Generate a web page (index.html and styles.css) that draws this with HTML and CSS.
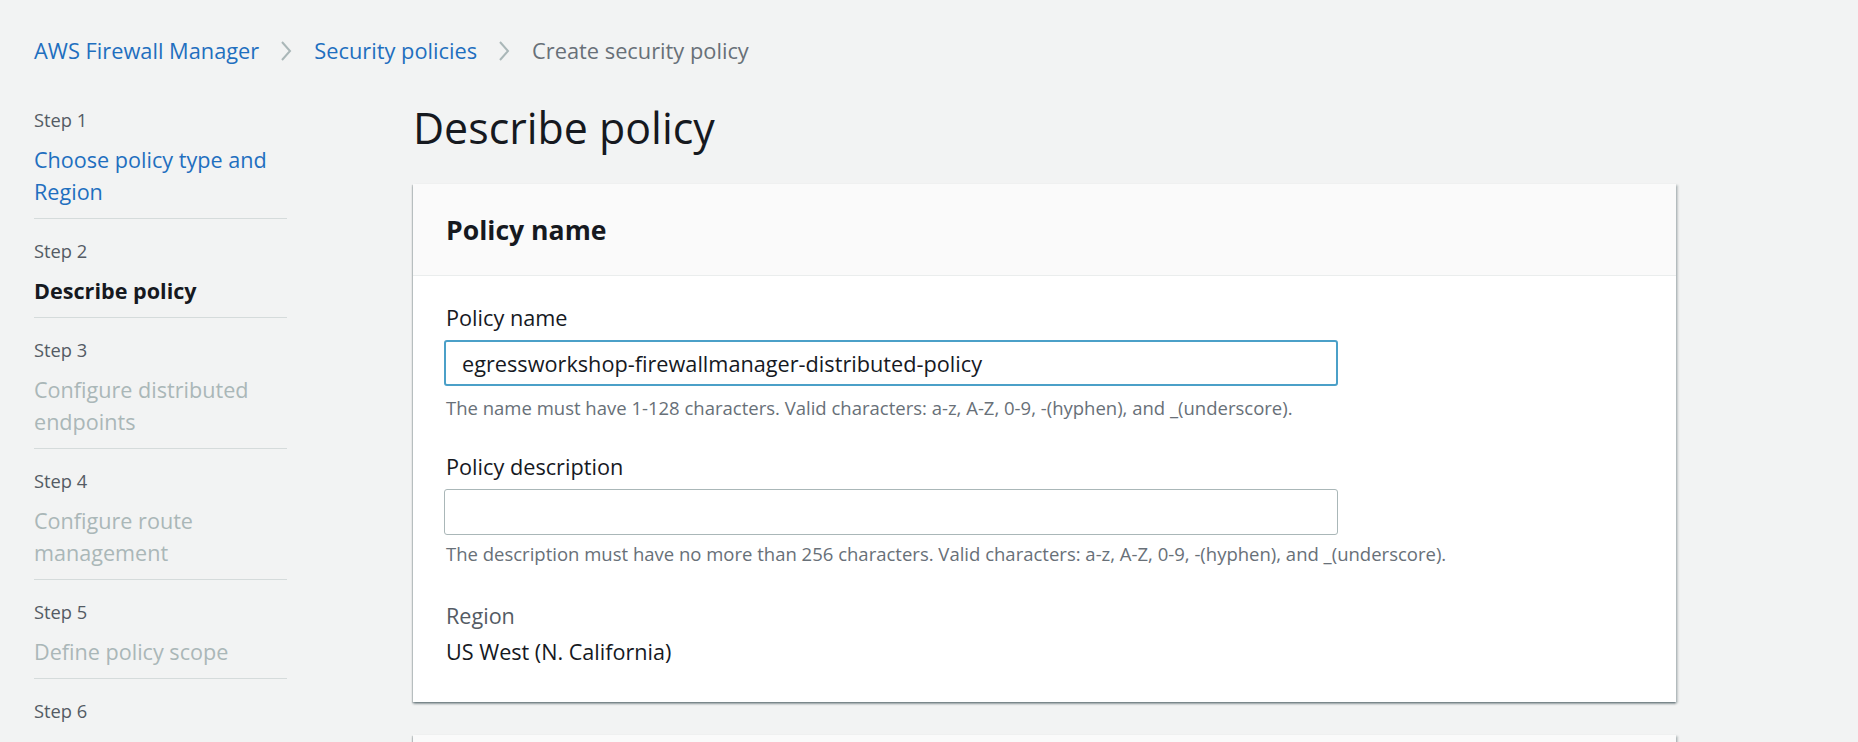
FILE: index.html
```html
<!DOCTYPE html>
<html lang="en">
<head>
<meta charset="utf-8">
<title>Create security policy</title>
<link rel="stylesheet" href="styles.css">
</head>
<body>
<div class="page">
  <nav class="breadcrumbs">
    <a class="crumb link" href="#">AWS Firewall Manager</a>
    <svg class="chev" viewBox="0 0 12 22" width="12" height="22"><polyline points="2,2 10,11 2,20" fill="none" stroke="#aab7b8" stroke-width="2"/></svg>
    <a class="crumb link" href="#">Security policies</a>
    <svg class="chev" viewBox="0 0 12 22" width="12" height="22"><polyline points="2,2 10,11 2,20" fill="none" stroke="#aab7b8" stroke-width="2"/></svg>
    <span class="crumb current">Create security policy</span>
  </nav>
  <div class="layout">
    <ul class="steps">
      <li class="step">
        <div class="step-num">Step 1</div>
        <a class="step-title link" href="#">Choose policy type and Region</a>
      </li>
      <li class="step">
        <div class="step-num">Step 2</div>
        <div class="step-title active">Describe policy</div>
      </li>
      <li class="step">
        <div class="step-num">Step 3</div>
        <div class="step-title disabled">Configure distributed endpoints</div>
      </li>
      <li class="step">
        <div class="step-num">Step 4</div>
        <div class="step-title disabled">Configure route management</div>
      </li>
      <li class="step">
        <div class="step-num">Step 5</div>
        <div class="step-title disabled">Define policy scope</div>
      </li>
      <li class="step">
        <div class="step-num">Step 6</div>
        <div class="step-title disabled">Configure policy tags</div>
      </li>
    </ul>
    <main class="main">
      <h1 class="page-title">Describe policy</h1>
      <section class="card">
        <header class="card-header"><h2>Policy name</h2></header>
        <div class="card-body">
          <label class="field-label" for="pname">Policy name</label>
          <input id="pname" class="input focused" type="text" value="egressworkshop-firewallmanager-distributed-policy">
          <div class="hint hint-1">The name must have 1-128 characters. Valid characters: a-z, A-Z, 0-9, -(hyphen), and _(underscore).</div>
          <label class="field-label label-2" for="pdesc">Policy description</label>
          <input id="pdesc" class="input" type="text" value="">
          <div class="hint hint-2">The description must have no more than 256 characters. Valid characters: a-z, A-Z, 0-9, -(hyphen), and _(underscore).</div>
          <div class="kv-label">Region</div>
          <div class="kv-value">US West (N. California)</div>
        </div>
      </section>
      <section class="card card-next">
        <header class="card-header card-header-empty"></header>
      </section>
    </main>
  </div>
</div>
</body>
</html>
```
FILE: styles.css
```css
* { box-sizing: border-box; }
html, body { margin: 0; padding: 0; }
body {
  background: #f2f3f3;
  font-family: "Open Sans", Roboto, "Liberation Sans", sans-serif;
  color: #16191f;
  width: 1858px;
  height: 742px;
  overflow: hidden;
}
.page { padding: 37px 0 0 34px; }
.link { color: #1f6fbf; text-decoration: none; }

.breadcrumbs {
  display: flex;
  align-items: center;
  height: 28px;
  font-size: 21.8px;
  line-height: 28px;
}
.chev { margin: 0 22px 0 21px; }
.crumb.current { color: #687078; }

.layout {
  display: flex;
  margin-top: 39px;
  gap: 126px;
}
.steps {
  list-style: none;
  margin: 0;
  padding: 4px 0 0 0;
  width: 253px;
  flex: none;
}
.step {
  padding: 20px 0 10px;
  border-bottom: 1px solid #d5dbdb;
}
.step:first-child { padding-top: 0; }
.step-num {
  font-size: 18.3px;
  line-height: 24px;
  color: #545b64;
}
.step-title {
  display: block;
  margin-top: 12px;
  font-size: 21.6px;
  line-height: 32px;
}
.step-title.active { font-weight: 700; color: #16191f; }
.step-title.disabled { color: #aab7b8; }

.main { width: 1263px; flex: none; }
.page-title {
  margin: 0 0 32px;
  font-size: 42.9px;
  line-height: 48px;
  font-weight: 400;
  color: #16191f;
}
.card {
  background: #fff;
  box-shadow: 0 2px 2px 0 rgba(0, 28, 36, 0.35), 2px 1px 2px 0 rgba(0, 28, 36, 0.18), -1px 1px 1px 0 rgba(0, 28, 36, 0.15);
}
.card-header {
  background: #fafafa;
  border-bottom: 1px solid #eaeded;
  padding: 31px 33px 30px;
}
.card-header h2 {
  margin: 0;
  font-size: 26.6px;
  line-height: 30px;
  font-weight: 700;
}
.card-header-empty { height: 92px; }
.card-body {
  padding: 28px 31px 36px;
}
.field-label {
  display: block;
  font-size: 21.7px;
  line-height: 28px;
  margin-bottom: 8px;
  padding-left: 2px;
}
.label-2 { margin-top: 34px; }
.input {
  display: block;
  width: 894px;
  height: 46px;
  border: 1px solid #aab7b8;
  border-radius: 3px;
  background: #fff;
  padding: 0 16px;
  font-family: inherit;
  font-size: 21.7px;
  color: #16191f;
  outline: none;
}
.input.focused {
  border: 2px solid #4ba0c8;
}
.hint {
  font-size: 18.5px;
  line-height: 22px;
  color: #687078;
  padding-left: 2px;
}
.hint-1 { margin-top: 11px; }
.hint-2 { margin-top: 8px; }
.kv-label {
  margin-top: 37px;
  font-size: 21.6px;
  line-height: 28px;
  color: #545b64;
  padding-left: 2px;
}
.kv-value {
  margin-top: 8px;
  font-size: 21.6px;
  line-height: 28px;
  padding-left: 2px;
}
.card-next { margin-top: 33px; }
```
